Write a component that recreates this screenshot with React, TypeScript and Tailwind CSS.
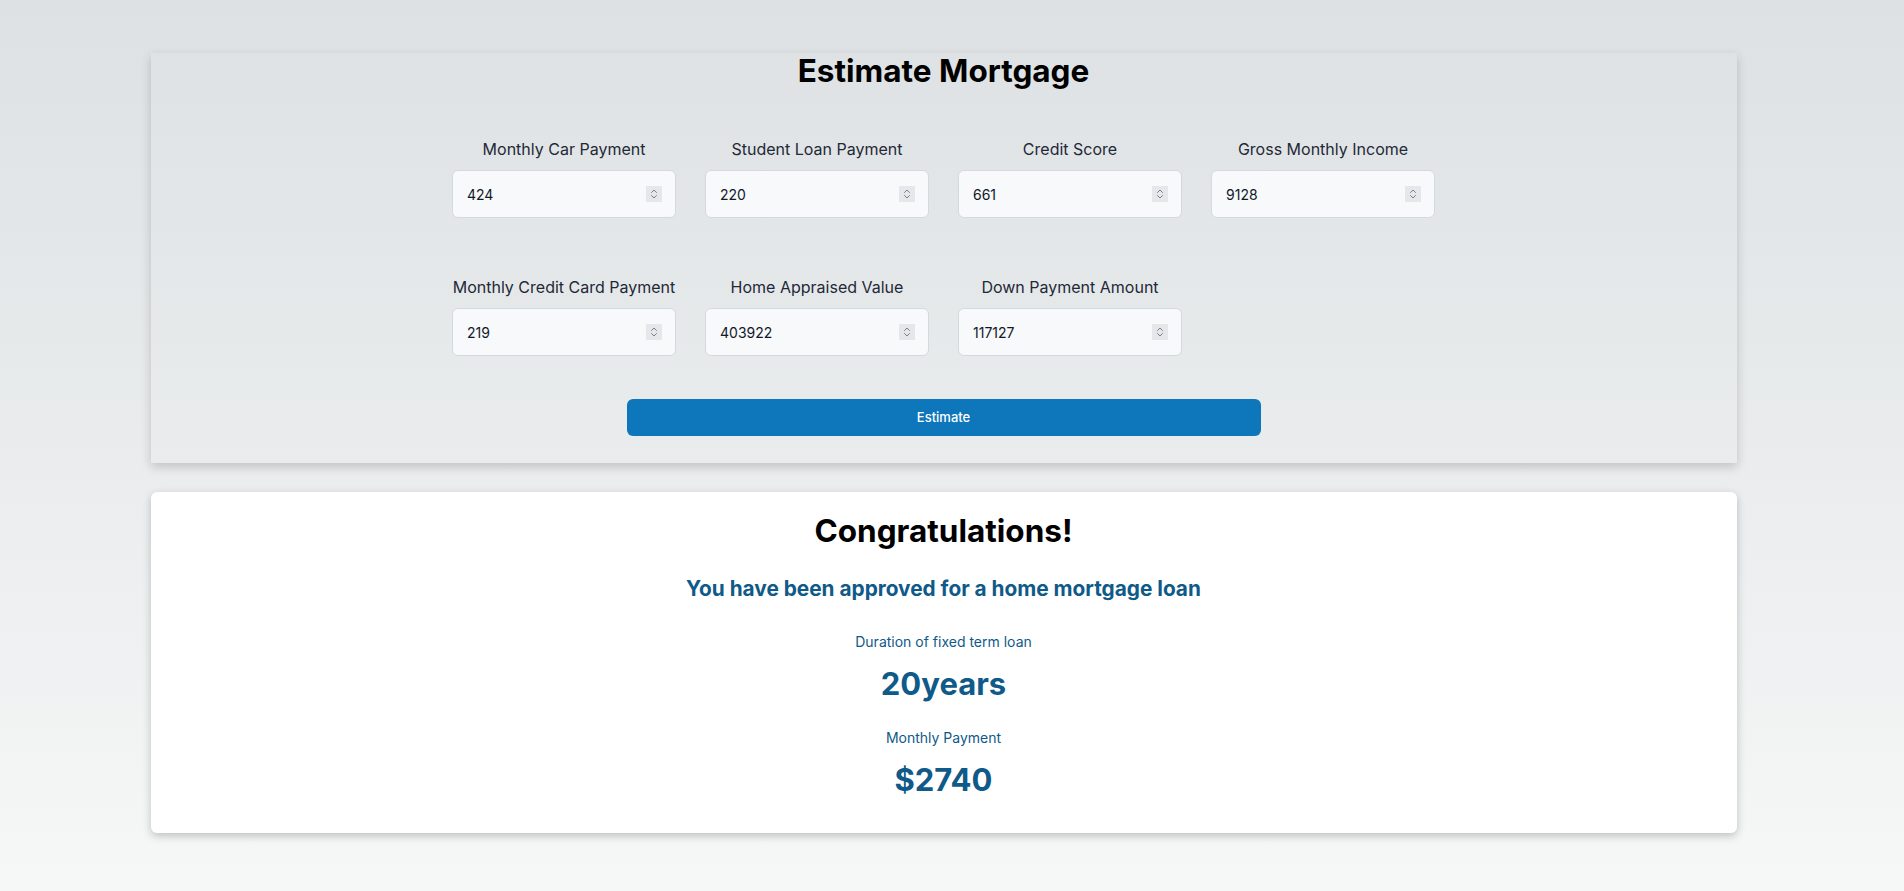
import { useState } from 'react';

const FIELDS: { label: string; value: string }[] = [
  { label: 'Monthly Car Payment', value: '424' },
  { label: 'Student Loan Payment', value: '220' },
  { label: 'Credit Score', value: '661' },
  { label: 'Gross Monthly Income', value: '9128' },
  { label: 'Monthly Credit Card Payment', value: '219' },
  { label: 'Home Appraised Value', value: '403922' },
  { label: 'Down Payment Amount', value: '117127' },
];

function Spinner() {
  return (
    <span className="pointer-events-none absolute right-[14px] top-1/2 -translate-y-1/2 w-4 h-4 bg-[#e6e7ea] flex items-center justify-center">
      <svg width="8" height="12" viewBox="0 0 8 12" fill="none" stroke="#7b7f86" strokeWidth="1" strokeLinecap="round" strokeLinejoin="round">
        <path d="M1.5 4.5 L4 2 L6.5 4.5" />
        <path d="M1.5 7.5 L4 10 L6.5 7.5" />
      </svg>
    </span>
  );
}

function Field({ label, value }: { label: string; value: string }) {
  const [val, setVal] = useState(value);
  return (
    <div className="flex flex-col items-center">
      <label className="text-base leading-6 font-normal text-[#1f2937] mb-[9px] whitespace-nowrap">{label}</label>
      <div className="relative">
        <input
          type="number"
          value={val}
          onChange={(e) => setVal(e.target.value)}
          className="w-[224px] h-[48px] rounded-md border border-[#d5d8dd] bg-[#f8f9fb] px-[14px] text-sm text-[#111827] outline-none [appearance:textfield] [&::-webkit-inner-spin-button]:appearance-none [&::-webkit-outer-spin-button]:appearance-none"
        />
        <Spinner />
      </div>
    </div>
  );
}

export default function App() {
  return (
    <div className="min-h-screen bg-gradient-to-b from-[#dde1e3] to-[#f6f7f7] font-['Inter',sans-serif] pb-[60px]">
      <div className="w-[1887px] pt-[53px]">
        <section className="w-[1586px] mx-auto shadow-[0_4px_10px_rgba(0,0,0,0.18)] pb-[27px]">
          <h1 className="text-[31.5px] leading-9 font-bold text-black text-center">Estimate Mortgage</h1>

          <div className="mt-[48px] grid grid-cols-[repeat(4,224px)] gap-x-[29px] gap-y-[57px] justify-center">
            {FIELDS.map((f) => (
              <Field key={f.label} label={f.label} value={f.value} />
            ))}
          </div>

          <div className="flex justify-center mt-[43px]">
            <button className="w-[634px] h-[37px] rounded-md bg-[#0e77bb] text-white text-[13px] font-medium">
              Estimate
            </button>
          </div>
        </section>

        <section className="w-[1586px] mx-auto mt-[29px] bg-white rounded-md shadow-[0_3px_8px_rgba(0,0,0,0.22)] pt-[21px] pb-[35px] text-center">
          <h2 className="text-[31.5px] leading-9 font-bold text-black">Congratulations!</h2>
          <p className="mt-[26px] text-[20.8px] leading-7 font-bold text-[#0f5a88]">
            You have been approved for a home mortgage loan
          </p>
          <p className="mt-[29px] text-sm leading-5 text-[#0f5a88]">Duration of fixed term loan</p>
          <p className="mt-[14px] text-[31px] leading-9 font-bold text-[#0f5a88]">20years</p>
          <p className="mt-[26px] text-sm leading-5 text-[#0f5a88]">Monthly Payment</p>
          <p className="mt-[14px] text-[31px] leading-9 font-bold text-[#0f5a88]">$2740</p>
        </section>
      </div>
    </div>
  );
}
